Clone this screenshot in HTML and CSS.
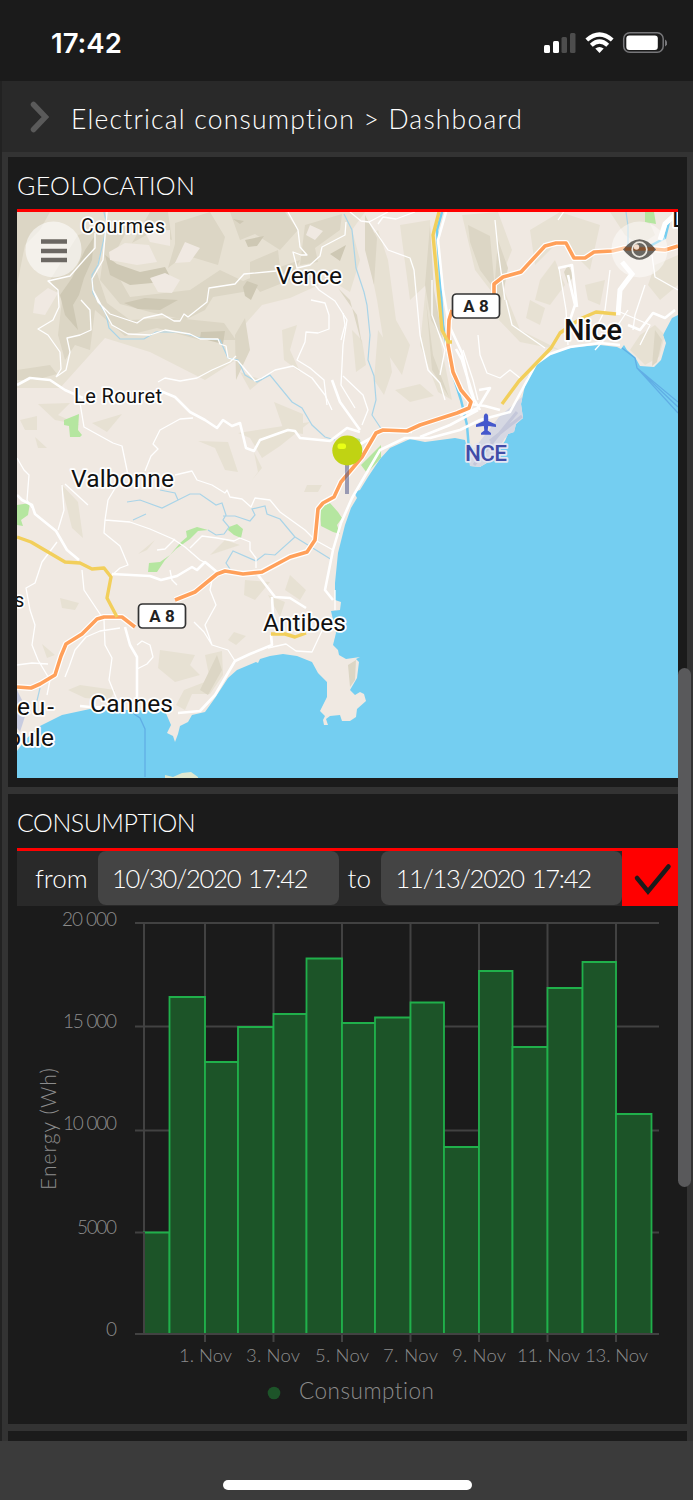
FILE: index.html
```html
<!DOCTYPE html>
<html lang="en">
<head>
  <meta charset="UTF-8" />
  <meta name="viewport" content="width=device-width, initial-scale=1.0"/>
  <title>Electrical consumption - Dashboard</title>
  <link rel="stylesheet" href="styles.css">
</head>
<body>
  <div class="status-bar">
    <span class="time">17:42</span>
    <svg class="status-icons" width="124" height="24" viewBox="543 31 124 24">
      <g fill="#fff">
        <rect x="544" y="45" width="6" height="8" rx="1.5"/>
        <rect x="553" y="41" width="6" height="12" rx="1.5"/>
        <rect x="561.500" y="37" width="5.500" height="16" rx="1.500" fill="#4d4d4d"/>
        <rect x="570" y="33" width="5.500" height="20" rx="1.500" fill="#4d4d4d"/>
      </g>
      <g fill="none" stroke="#fff" stroke-width="4.200">
        <path d="M586.800 40Q599.500 29 612.200 40"/>
        <path d="M591.300 45.300Q599.500 37.800 607.700 45.300"/>
      </g>
      <path d="M595.300 48.500Q599.500 45.500 603.700 48.500L599.500 53Z" fill="#fff"/>
      <rect x="623.700" y="32.800" width="39.500" height="19.500" rx="6" fill="none" stroke="#77777a" stroke-width="1.500"/>
      <rect x="626.300" y="35.500" width="31.500" height="14.500" rx="3" fill="#fff"/>
      <path d="M665 39.500Q667.200 40.500 667.200 43Q667.200 45.500 665 46.500Z" fill="#77777a"/>
    </svg>
  </div>

  <header>
    <svg class="chevron" width="20" height="32" viewBox="0 0 20 32"><path d="M4.500 3.500L16.500 16L4.500 28.500"/></svg>
    <h1>Electrical consumption &gt; Dashboard</h1>
  </header>

  <main>
    <section class="panel">
      <h2 class="geo-title">GEOLOCATION</h2>
      <div class="map">
        <svg width="661" height="566" viewBox="17 212 661 566">
          <rect x="17" y="212" width="661" height="566" fill="#74cef1"/>
          <defs>
            <path id="land" d="M17 751L25 740L40 726L62 715L90 709L165 711L168 718L171 725L167 733L173 736L175 742L178 734L180 726L188 722L192 715L205 712L215 698L228 678L237 670L256 662L258 663L260 659L270 656L283 654L297 656L312 662L318 673L327 682V697L320 711L325 716L323 720L324 725H328L326 719L330 716L340 715L342 721H350L356 717L357 709L366 701L364 694L360 692L355 695L350 690L357 678L359 662L356 659L360 657L346 659L339 655L338 650L333 645L336 633L331 611L340 610L341 602L335 600V583L338 553L345 525L351 508L357 498L354 492L360 490L368 477L380 459L390 448L410 439L425 442L455 438L465 440L468 452L470 466L480 467L492 460L498 450L505 441L508 434L514 432L516 424L523 418L521 404L524 390L527 378L536 364L550 353L575 347L600 345L617 347L621 349L624 345L627 350L635 357L640 366L654 367L661 360L666 343L663 335L672 318L678 315V212H17Z"/>
            <clipPath id="landClip"><use href="#land"/></clipPath>
          </defs>
          <use href="#land" fill="#f0e9e2"/>

          <!-- relief shading -->
          <g clip-path="url(#landClip)">
            <g fill="#e7e1d3">
              <path d="M17 212H365L352 230L360 260L350 292L330 280L290 298L262 305L240 330L236 360L205 380L150 352L105 338L78 368L60 388H17Z"/>
              <path d="M365 240L378 230L388 260L396 320L410 345L402 375L385 350L377 300Z"/>
              <path d="M400 225L430 220L432 300L446 370L452 400L438 392L420 345L426 285L410 300Z"/>
              <path d="M462 215L498 212L512 250L500 280L520 330L560 350L520 342L495 316L498 300L475 270Z"/>
              <path d="M560 212L600 225L590 270L560 240L535 265L530 230Z"/>
              <path d="M610 212H645L655 235L640 245L625 235ZM655 265L678 255V285L660 300L648 285ZM585 285L605 280L600 305L588 300ZM530 300L545 308L540 325L526 318Z"/>
              <path d="M640 335L655 325L665 335L659 357L645 365L630 350Z"/>
              <path d="M540 280L555 260L565 285L550 305L535 300Z"/>
              <path d="M378 330L388 345L392 372L384 395L374 380ZM352 330L362 340L366 365L356 372ZM395 390L420 384L434 396L410 402ZM282 330L297 325L290 350L300 372L284 360ZM240 372L262 380L250 390Z"/>
              <path d="M38 404L70 403L58 415L80 425L55 420ZM20 420L37 416V430L25 430ZM35 437L47 448L38 448ZM92 423L122 414L107 432ZM61 484L78 502L83 538L72 528Z"/>
              <path d="M198 441L228 442L238 472L225 470L215 448ZM238 433L310 422L280 446L262 458L250 438ZM274 402L303 414V434L284 431ZM254 452L262 468L252 480L258 472ZM307 485L322 485L318 492H304Z"/>
              <path d="M155 540L147 550L138 554ZM245 580L270 582L255 600L244 595ZM160 650L195 655L190 665L200 675L175 682L158 668ZM68 690L80 685L115 690L110 700L85 698ZM205 655L222 651L223 675L210 694H192L185 710L176 705L184 690L210 680Z"/>
              <path d="M60 598L79 603L75 610L62 608ZM42 644L55 655L47 658ZM234 632L246 636L236 645L228 640ZM268 595L285 602L280 617ZM290 575L306 590L300 600L285 590ZM225 540L240 545L210 555Z"/>
            </g>
            <g fill="#dcd6c5">
              <path d="M17 212H50L40 230L25 245L17 285Z"/>
              <path d="M78 235L107 227L96 270L107 303L130 320L175 318L224 323L236 340L200 340L157 328L125 336L95 310L90 350L75 345L65 360L58 335L62 300L50 280Z"/>
              <path d="M107 230L130 225L110 262L130 297L190 290L220 270L243 281L270 270L255 290L213 297L205 310L185 320L150 312L120 304L100 280Z"/>
              <path d="M150 212H168L172 240L150 233L132 243ZM175 223L210 212L225 237L218 265L185 255L168 268L175 244ZM230 212H285L298 230L280 250L255 234L240 240ZM250 262L278 250L280 267L300 260L290 280L260 292L250 280ZM305 225L342 214L340 230L315 248L318 262L300 265Z"/>
              <path d="M17 370L50 365L57 374L35 380H17ZM235 335L245 318L250 350L236 380ZM350 300L338 288L357 315L362 345Z"/>
              <path d="M365 215L377 238L374 285L365 250ZM430 225L434 290L443 340L431 320L425 285ZM426 300L433 355L449 397L432 370ZM468 225L490 236L495 290L480 270L470 242ZM498 240L508 268L500 310L495 280ZM568 265L574 276L568 284L564 272Z"/>
              <path d="M655 330L662 340L657 362L652 366ZM348 665L356 660L355 680L350 687ZM217 655L222 670L208 695L200 690Z"/>
            </g>
            <g fill="#cec8b4">
              <path d="M94 237L92 260L84 278L79 295L73 305L78 330L65 315L60 295L72 278L78 265L85 250Z"/>
              <path d="M105 255L117 264L140 272L165 267L172 280L152 283L130 285L110 275ZM124 303L145 298L178 300L160 310L138 309ZM201 332L225 331L223 344L211 341L200 338ZM233 219L244 221L240 224ZM243 287L247 281L258 285L251 300L245 296ZM330 254L346 245L340 261ZM245 240L264 236L257 246L248 247Z"/>
            </g>
            <g fill="#f0e9e2">
              <path d="M109 252L125 243L149 245L157 262L137 265L110 260ZM145 232L170 230V246L150 242ZM35 298L48 288L58 293L45 315L33 313ZM185 242L200 248L190 262L175 263ZM310 225L323 231L315 240L306 235ZM150 278L165 273L180 280L172 293L158 292Z"/>
            </g>
            <path d="M64 420L79 414L78 430L82 435L80 437H70L69 426L64 425ZM17 505L30 503L28 515L21 520L23 526L17 525ZM148 572L149 563L160 562L170 555L180 543L187 537L186 531L197 527L208 530L198 531L190 539L176 549L165 560L157 572ZM229 527L237 524L243 529L241 538L234 535L228 530ZM320 507L330 503L338 512L342 518L337 525L340 534L333 532L321 526ZM361 465L381 445V458L367 473ZM645 212H654L656 224L645 222ZM348 436L360 439L362 452H348Z" fill="#b5e6a0"/>
            <path d="M522 397L524 418L515 432L505 438L492 460L480 467H469L473 450L499 417Z" fill="#d6d8e3"/>
            <path d="M474 465L517 412M490 441L522 416" stroke="#c4c7da" stroke-width="3"/>
            <path d="M17 690L27 710L20 732L17 728Z" fill="#c8cce0"/>
          </g>

          <!-- rivers -->
          <g class="river">
            <path d="M104 212L107 225L98 265L92 275L93 293L106 314L109 328L120 339H144L156 332L180 332L200 338L220 340L228 358L238 360L245 375L257 382L270 375L292 402L302 408L312 425L325 437L335 440"/>
            <path d="M344 214L352 230L356 268L364 292L367 305L370 335L368 360L374 376L376 400L372 415L384 433"/>
            <path d="M127 502L140 500L162 508L190 494H200L216 505L222 503L226 515L223 520L229 527L224 534L216 535L208 530M160 490L175 493L178 500M223 516H235L250 521L255 515L252 509L265 506L267 514L280 519L295 537L275 555L265 554L256 561L233 551L226 563L230 569M295 537L332 560M133 520L146 514M40 688L35 709"/>
            <path d="M626 212L628 226V246L635 250"/>
          </g>
          <g fill="none" stroke="#74cef1" stroke-width="2.500">
            <path d="M442 212L437 230L440 277L443 325L451 369L461 400L467 425L469 450M669 222L665 238L650 246"/>
          </g>

          <!-- minor roads -->
          <g class="road thin">
            <path d="M95 233V248L84 260L70 276L48 281L58 290L59 307L53 320L38 329L48 335L60 352L61 369L56 377M107 212L103 260L92 279L93 290L98 302L110 314L137 323L144 318L162 314L174 321H180L184 314L188 317L207 302L209 288L235 284L244 274L276 271M93 290L112 325L128 334L150 335L165 330L190 334L200 339L218 339L220 344L226 346L228 358L238 361L255 381L262 378L275 370L293 366L312 378L325 395L332 410M81 300L90 310L91 330L80 335L67 338L70 352L66 370L56 377"/>
            <path d="M158 382L165 378L180 381L197 378L212 370L230 362L236 356M288 212L298 230L300 247L307 255H301L293 252L297 268L310 265L320 256L322 247L345 235L346 222M311 280L319 290L335 301L347 320L343 345L341 385L355 408M311 300L325 303L329 315V329L318 333L306 332L305 342L297 360L310 368L324 380L327 405"/>
            <path d="M80 403L84 427L113 443L122 446L128 475M145 471L151 456L158 449L153 444L160 430L180 419L193 418M175 475L192 471L197 480L212 485L225 493L227 490L230 497L242 499L251 507L255 498L270 500L280 512L305 530L315 540L333 550M120 480L108 500L105 520L130 522L150 529L173 539L185 547L200 560L210 565M105 520L104 533L120 546L128 565L120 568L110 577M175 539L165 549L157 550M190 548L202 536L217 538L234 541L240 538L250 542V550L256 558V568M65 484L88 505M62 485L64 510L58 530M57 542L42 562L35 583L26 588L30 610L35 625L32 645L38 660L50 680L47 695M82 570L84 590L92 602L104 620L105 645L112 658L109 680L117 700M65 677L69 667L75 650L86 637L100 631L120 628M17 665L32 663L48 664M170 570L172 580L177 585M213 575L210 590L216 605L205 625L212 645L228 650L235 661M194 622L204 632L212 645M137 669L147 664L153 657L150 645L142 641L137 645M335 590L335 610M17 458L24 470L29 475L27 500L32 508M268 648L286 644L296 651L312 652L328 618"/>
            <path d="M350 212L361 221L369 222L388 250L410 258L414 270L420 335L428 370L440 383L445 400M378 224L383 217L396 219L415 212M369 222L388 212M432 280V315L445 350L443 360L440 375M495 220L498 250L505 300M506 300L512 325L545 348M478 335L480 355L487 373L500 378L510 370L520 378M559 268L566 310L568 345M610 270L605 310L595 330M652 255L655 277L678 290M645 285L635 315L633 330M463 350L473 380L478 400M565 210L558 220M343 313L345 325L341 340M343 376L363 395L368 410L362 425M620 312L650 325L640 345M595 350L620 322L628 310"/>
          </g>
          <g class="road">
            <path d="M17 385L30 378L50 380L65 390L83 398M158 390L175 397L190 412L205 420L217 428L223 420L232 426L240 423L246 448L254 451L260 440L288 430L295 431L300 438L330 441L347 428L360 432M17 495L22 500L32 505L35 514L56 531L67 550L79 560M112 574L150 576L161 580L177 576L192 567L197 570L205 562L217 572M80 706L90 707L123 708M178 713L200 711L215 695L235 661L250 654L272 645L271 635M125 627L130 645L137 657V710M258 575L275 597L290 598L306 608M272 597L273 615M332 380L340 402L360 430M333 600L325 590L333 550L341 523L352 498L380 450L405 438L430 438L460 430L480 420L510 412L536 364L550 354L570 347L600 343L620 345"/>
            <path d="M446 212L438 240L443 290L449 325L462 353L470 390L474 400M456 349L462 360L474 399L480 410M479 390L490 388L478 408L460 415M470 404L485 406L500 410M568 275L575 305L565 335M628 325L640 330L653 313L665 318L675 310M558 268L572 265L577 307M350 450L385 430L412 432M420 437L450 425L478 410"/>
          </g>
          <path d="M622 262L632 274L620 290L618 315M678 212L665 224L660 240" fill="none" stroke="#fff" stroke-width="5"/>

          <!-- main roads -->
          <g class="casing">
            <path d="M17 687L31 688L40 684L55 675L61 656L66 644L82 634L97 619L104 617H122L135 627M175 600L195 592L217 574L225 571L243 574L262 572L290 557L307 552L315 540L318 509L323 503L334 497L341 482L362 457L376 433L383 430L407 431L420 425L457 413L469 408L471 402L461 390L453 372L448 345L449 320L452 310M494 297V284L503 277L521 272L545 246L556 243H566L574 258H585L594 252L612 251L625 248H640L665 250L678 246"/>
          </g>
          <g class="motorway">
            <path d="M17 687L31 688L40 684L55 675L61 656L66 644L82 634L97 619L104 617H122L135 627M175 600L195 592L217 574L225 571L243 574L262 572L290 557L307 552L315 540L318 509L323 503L334 497L341 482L362 457L376 433L383 430L407 431L420 425L457 413L469 408L471 402L461 390L453 372L448 345L449 320L452 310M494 297V284L503 277L521 272L545 246L556 243H566L574 258H585L594 252L612 251L625 248H640L665 250L678 246"/>
          </g>
          <g class="trunk">
            <path d="M17 537L31 542L65 562L80 563L92 569L104 568L111 577L107 598L117 617M439 212L433 235L442 330L448 342H452M502 404L519 381L551 348L560 333L580 319L596 312L616 314M271 634L285 634L295 637L306 633"/>
          </g>

          <!-- ferry routes -->
          <path d="M134 714L140 718L145 729V777M622 348L635 358L637 368L678 413M637 368L678 407M637 368L678 402" fill="none" stroke="#61aee5" stroke-width="1.3"/>
          <path d="M165 775L173 777L182 773L191 772L198 777V778H165Z" fill="#e0e8cf"/>

          <!-- place names -->
          <g class="place">
            <text x="81" y="232.500" font-size="19.500" textLength="84">Courmes</text>
            <text x="276" y="284" font-size="24.500" textLength="66">Vence</text>
            <text x="74" y="403" font-size="20" textLength="88">Le Rouret</text>
            <text x="71" y="487" font-size="24.500" textLength="103">Valbonne</text>
            <text x="564" y="340" font-size="29" textLength="58" class="city">Nice</text>
            <text x="263" y="631" font-size="24.500" textLength="83">Antibes</text>
            <text x="90" y="712" font-size="24.500" textLength="83">Cannes</text>
            <text x="14" y="607" font-size="20">s</text>
            <text x="17" y="715" font-size="24.500" textLength="37">eu-</text>
            <text x="7" y="746" font-size="24.500" textLength="47">oule</text>
            <text x="672" y="227" font-size="25">L</text>
          </g>
          <text x="465" y="461" font-size="22.500" textLength="42" class="airport">NCE</text>
          <path d="M486 413.500Q488 413.500 488.200 417V421L496 424.500V427L488.200 426L487.700 430.500L491 433V434.800H481V433L484.300 430.500L483.800 426L476 427V424.500L483.800 421V417Q484 413.500 486 413.500Z" fill="#4558cc"/>
          <g class="shield">
            <rect x="452.500" y="294" width="47" height="24" rx="4"/>
            <text x="476" y="312">A 8</text>
            <rect x="138.500" y="604" width="47" height="24" rx="4"/>
            <text x="162" y="622">A 8</text>
          </g>

          <!-- marker -->
          <path d="M347 464V494" stroke="#50588a" stroke-opacity=".55" stroke-width="4"/>
          <circle cx="347.300" cy="450.500" r="15" fill="#c0d313"/>
          <rect x="337.500" y="443.500" width="8.500" height="5.500" rx="2.500" fill="#eaff15"/>

          <!-- map buttons -->
          <circle cx="53.500" cy="249.500" r="28" fill="#fff" fill-opacity=".55"/>
          <path d="M41 241.500H67M41 251H67M41 260H67" stroke="#6c6863" stroke-width="4.300"/>
          <circle cx="639.500" cy="249.500" r="28" fill="#fff" fill-opacity=".45"/>
          <path d="M623 249.500Q639.500 229 656 249.500Q639.500 270 623 249.500Z" fill="#56534f" fill-opacity=".88"/>
          <path d="M625 249H654" stroke="#8f4a1c" stroke-opacity=".7" stroke-width="3.500"/>
          <circle cx="639.500" cy="249.500" r="7.300" fill="none" stroke="#ece8e1" stroke-width="1.700"/>
          <circle cx="636.500" cy="247" r="2.700" fill="#f3dccb"/>
        </svg>
      </div>
    </section>

    <section class="panel">
      <h2>CONSUMPTION</h2>
      <div class="filters">
        <span class="from">from</span>
        <span class="date">10/30/2020 17:42</span>
        <span class="to">to</span>
        <span class="date">11/13/2020 17:42</span>
        <button aria-label="Apply">
          <svg width="42" height="34" viewBox="0 0 42 34"><path d="M6 15L17 28.500L37.500 3.500"/></svg>
        </button>
      </div>
      <svg class="chart" width="679" height="518" viewBox="8 906 679 518">
        <path class="grid" d="M135 923H659M135 1026.500H659M135 1130.500H659M135 1232.500H659M144 923V1334M205 923V1342M273.500 923V1342M342 923V1342M410.500 923V1342M479 923V1342M547.500 923V1342M616 923V1342"/>
        <g class="bars">
          <path d="M144 1334V1232.500H169.500V1334"/>
          <path d="M169.500 1334V997H205V1334"/>
          <path d="M205 1334V1062H238V1334"/>
          <path d="M238 1334V1027H273.500V1334"/>
          <path d="M273.500 1334V1014H306.500V1334"/>
          <path d="M306.500 1334V958.500H342V1334"/>
          <path d="M342 1334V1023H375V1334"/>
          <path d="M375 1334V1017.500H410.500V1334"/>
          <path d="M410.500 1334V1002.500H444V1334"/>
          <path d="M444 1334V1147H479V1334"/>
          <path d="M479 1334V971H512.500V1334"/>
          <path d="M512.500 1334V1047H547.500V1334"/>
          <path d="M547.500 1334V988H582.500V1334"/>
          <path d="M582.500 1334V962H616V1334"/>
          <path d="M616 1334V1114H651.500V1334"/>
        </g>
        <path class="grid" d="M144 1232V1334M135 1334H659"/>
        <g class="y-labels">
          <text x="62" y="926" textLength="55">20 000</text>
          <text x="63" y="1028" textLength="54">15 000</text>
          <text x="63" y="1130" textLength="54">10 000</text>
          <text x="77" y="1234" textLength="40">5000</text>
          <text x="106" y="1336">0</text>
        </g>
        <g class="x-labels">
          <text x="179" y="1361.500" textLength="53">1. Nov</text>
          <text x="246" y="1361.500" textLength="54">3. Nov</text>
          <text x="315" y="1361.500" textLength="54">5. Nov</text>
          <text x="383" y="1361.500" textLength="55">7. Nov</text>
          <text x="452" y="1361.500" textLength="54">9. Nov</text>
          <text x="517" y="1361.500" textLength="63">11. Nov</text>
          <text x="585" y="1361.500" textLength="63">13. Nov</text>
        </g>
        <text class="axis-title" transform="translate(56 1190) rotate(-90)" textLength="122">Energy (Wh)</text>
        <circle cx="274" cy="1393" r="6.300" fill="#1d5429"/>
        <text class="legend" x="299" y="1399" textLength="135">Consumption</text>
      </svg>
    </section>

    <section class="panel next"></section>
    <div class="scrollbar"></div>
  </main>

  <footer><div class="home-bar"></div></footer>
</body>
</html>
```
FILE: styles.css
```css
* {
  box-sizing: border-box;
}

body {
  margin: 0;
  width: 693px;
  height: 1500px;
  overflow: hidden;
  display: flex;
  flex-direction: column;
  font-family: Lato, sans-serif;
  font-weight: 300;
  font-variant-ligatures: none;
  color: #fff;
  background-color: #1b1b1b;
}

svg {
  display: block;
}

.status-bar {
  height: 81px;
  display: flex;
  justify-content: space-between;
  align-items: center;
  padding: 5px 26px 0 51px;
}

.time {
  font-family: Inter, sans-serif;
  font-size: 27.5px;
  font-weight: 600;
  color: #fff;
}

header {
  height: 71px;
  display: flex;
  align-items: center;
  gap: 22px;
  padding-left: 27px;
  border-left: 2px solid #222;
  background-color: #292929;
}

.chevron path {
  fill: none;
  stroke: #5a5a5a;
  stroke-width: 5.500;
  stroke-linecap: round;
}

h1 {
  margin: 0;
  padding-top: 4px;
  font-size: 26.5px;
  font-weight: 300;
  letter-spacing: 1.2px;
}

main {
  position: relative;
  height: 1289px;
  display: flex;
  flex-direction: column;
  gap: 7px;
  padding: 5px 6px 0;
  border-left: 2px solid #222;
  background-color: #333;
  overflow: hidden;
}

.panel {
  flex: none;
  height: 630px;
  padding: 0 9px;
  background-color: #1b1b1b;
}

.next {
  height: 10px;
}

h2 {
  height: 57px;
  margin: 0;
  border-bottom: 3px solid #f00;
  font-size: 25px;
  font-weight: 300;
  line-height: 57px;
  letter-spacing: -0.5px;
}

.geo-title {
  height: 55px;
  line-height: 56px;
  letter-spacing: 0.3px;
}

.map {
  width: 661px;
  height: 566px;
}

.river {
  fill: none;
  stroke: #a9d4e8;
  stroke-width: 1.2;
}

.road {
  fill: none;
  stroke: #fff;
  stroke-width: 2.6;
  stroke-linejoin: round;
}

.thin {
  stroke-width: 1.3;
}

.casing {
  fill: none;
  stroke: #fff;
  stroke-width: 6;
  stroke-linejoin: round;
}

.motorway {
  fill: none;
  stroke: #ffa05a;
  stroke-width: 3.6;
  stroke-linejoin: round;
}

.trunk {
  fill: none;
  stroke: #f2cf5b;
  stroke-width: 3.4;
  stroke-linejoin: round;
}

.place, .airport {
  font-family: Roboto, sans-serif;
  font-weight: 400;
  fill: #111;
  stroke: #fff;
  stroke-width: 3.5px;
  stroke-linejoin: round;
  paint-order: stroke;
}

.city {
  font-weight: 500;
}

.airport {
  font-weight: 500;
  fill: #414ca8;
  stroke: #e4e6f2;
}

.shield rect {
  fill: #fff;
  stroke: #333;
  stroke-width: 1.7;
}

.shield text {
  font-family: Roboto, sans-serif;
  font-size: 17px;
  font-weight: 700;
  text-anchor: middle;
  fill: #222;
}

.filters {
  height: 55px;
  display: flex;
  align-items: flex-start;
  background-color: #292929;
  font-size: 26px;
  line-height: 54px;
}

.from {
  width: 81px;
  padding-left: 18px;
}

.to {
  width: 43px;
  padding-left: 9px;
}

.date {
  width: 241px;
  height: 54px;
  padding-left: 14px;
  border-radius: 8px;
  background-color: #444;
  font-size: 25.5px;
  letter-spacing: -1.2px;
  word-spacing: 2px;
}

.filters button {
  width: 56px;
  height: 55px;
  padding: 3px 0 0 9px;
  border: none;
  background-color: #f00;
}

.filters button path {
  fill: none;
  stroke: #1b1b1b;
  stroke-width: 4.5;
  stroke-linecap: round;
}

.chart {
  margin: 0 -9px;
  font-size: 19px;
  font-weight: 300;
  fill: #8c8c8c;
}

.grid {
  fill: none;
  stroke: #424242;
  stroke-width: 2;
}

.bars {
  fill: #1c5428;
  stroke: #20b04b;
  stroke-width: 1.8;
}

.x-labels {
  font-size: 18.5px;
}

.axis-title {
  font-size: 21px;
}

.legend {
  font-size: 22.5px;
}

.scrollbar {
  position: absolute;
  top: 516px;
  right: 2px;
  width: 13px;
  height: 519px;
  border-radius: 7px;
  background-color: #59595b;
}

footer {
  height: 59px;
  padding-top: 39px;
  background-color: #3b3b3b;
}

.home-bar {
  width: 249px;
  height: 10px;
  margin: 0 auto 0 223px;
  border-radius: 5px;
  background-color: #fff;
}
```
